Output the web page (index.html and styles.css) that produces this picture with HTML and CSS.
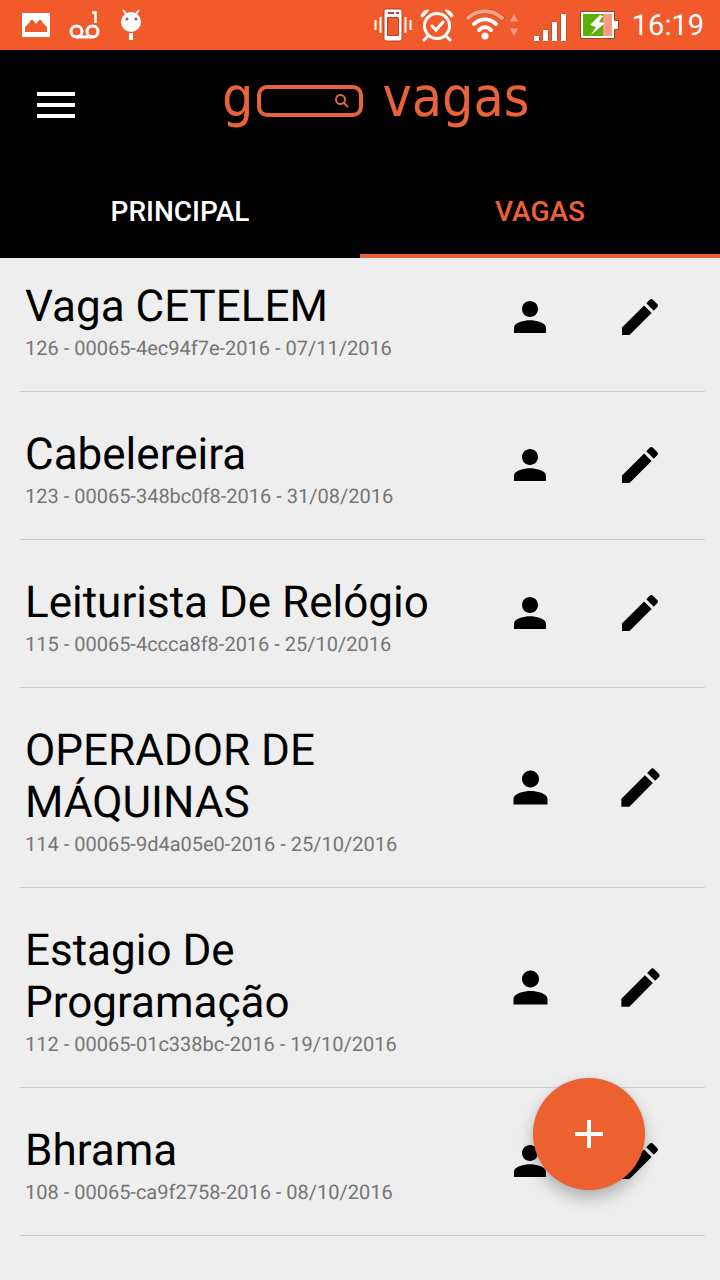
FILE: index.html
```html
<!DOCTYPE html>
<html lang="pt-BR">
<head>
<meta charset="utf-8">
<meta name="viewport" content="width=device-width, initial-scale=1">
<title>Go Vagas</title>
<link rel="stylesheet" href="styles.css">
</head>
<body>
<svg class="defs" aria-hidden="true">
  <symbol id="person" viewBox="0 0 24 24"><path d="M12 12c2.210 0 4-1.790 4-4s-1.790-4-4-4-4 1.790-4 4 1.790 4 4 4zm0 1.600c-2.670 0-8 1.050-8 3.720V20h16v-2.680c0-2.670-5.330-3.720-8-3.720z"/></symbol>
  <symbol id="pencil" viewBox="0 0 24 24"><path d="M3 17.250V21h3.750L17.810 9.940l-3.750-3.750L3 17.250zM20.710 7.040c.39-.39.39-1.020 0-1.410l-2.340-2.340c-.39-.39-1.020-.39-1.410 0l-1.830 1.830 3.750 3.750 1.830-1.830z"/></symbol>
</svg>
<div class="status">
  <div class="status-left">
    <svg width="28" height="24" viewBox="0 0 28 24"><path fill="#fff" fill-rule="evenodd" d="M0 0h28v24H0zM3 19h22v-5l-4-4-2-3h-2l-3 4-3-4H9l-2 3-4 4z"/></svg>
    <svg width="32" height="28" viewBox="0 0 32 28" fill="none" stroke="#fff" stroke-width="3"><circle cx="7.500" cy="20.500" r="5.500"/><circle cx="23.500" cy="20.500" r="5.500"/><path d="M7 26h17"/><path d="M23 1.500h3.500V12" stroke-width="2.500"/></svg>
    <svg width="22" height="32" viewBox="0 0 22 32"><circle cx="11" cy="13" r="10" fill="#fff"/><path d="M3 1l4 5M19 1l-4 5" stroke="#fff" stroke-width="2"/><path d="M11 24v7" stroke="#fff" stroke-width="4"/><circle cx="7" cy="10" r="1.500" fill="#a55"/><circle cx="16" cy="10" r="1.500" fill="#a55"/></svg>
  </div>
  <div class="status-right">
    <svg width="38" height="34" viewBox="0 0 38 34"><rect x="10" y="1" width="18" height="32" rx="2" fill="#fff" stroke="#b5442a"/><path fill="#f15a2b" stroke="#b5442a" d="M13.500 9.500h11v18h-11z"/><path d="M14 5h6M22 5h3" stroke="#b5442a" stroke-width="2"/><path d="M1.500 12v10M6.500 9v16M31.500 9v16M36.500 12v10" stroke="#fff" stroke-width="2"/></svg>
    <svg width="36" height="34" viewBox="0 0 36 34" fill="none" stroke="#fff" stroke-linecap="round"><circle cx="18" cy="18" r="12.500" stroke-width="3"/><path d="M13 18l4 4 7-8M8 29l-3 3M28 29l3 3" stroke-width="3"/><path d="M2 8c1-4 4-6 8-6L4 9zM34 8c-1-4-4-6-8-6l6 7z" fill="#fff" stroke-width="1"/></svg>
    <svg class="wifi" width="40" height="34" viewBox="0 0 40 34" fill="none" stroke="#fff" stroke-linecap="round"><path d="M3 10c10-9 24-9 34 0" stroke="#b5442a" stroke-width="5"/><path d="M3 10c10-9 24-9 34 0" stroke="#ffa283" stroke-width="4"/><path d="M9 16c7-6 15-6 22 0M14 22c4-4 8-4 12 0" stroke-width="4"/><circle cx="20" cy="28" r="3.500" fill="#fff" stroke="none"/></svg>
    <svg class="arrows" width="12" height="26" viewBox="0 0 12 26" fill="#ff9878" stroke="#d9603c"><path d="M6 1l5 9H1zM6 25l5-9H1z"/></svg>
    <svg class="signal" width="34" height="30" viewBox="0 0 34 30" fill="#fff" stroke="#c64d2a"><rect x=".5" y="23.500" width="6" height="6" rx="1"/><rect x="9.500" y="17.500" width="6" height="12" rx="1"/><rect x="18.500" y="9.500" width="6" height="20" rx="1"/><rect x="27.500" y="1.500" width="6" height="28" rx="1"/></svg>
    <svg class="battery" width="39" height="28" viewBox="0 0 39 28"><path d="M.5.500h34v9h4v9h-4v9H.5z" fill="#fff" stroke="#8b4a2b"/><path fill="#5bb00c" d="M3 3h20v22H3z"/><path fill="#f99b84" d="M23 3h9v22h-9z"/><path fill="#fff" d="M20 4L10 14l6 2-5 8 14-12-6-1 4-6z"/></svg>
    <span class="clock">16:19</span>
  </div>
</div>
<header class="header">
  <div class="bar">
    <button class="menu" aria-label="Menu"><span></span><span></span><span></span></button>
    <div class="logo">
      <span>g</span>
      <div class="logo-box"><svg width="14" height="14" viewBox="0 0 14 14" fill="none" stroke="#e8623a" stroke-width="2"><circle cx="5.500" cy="5.500" r="4.500"/><path d="M8.500 8.500L13 13"/></svg></div>
      <span>vagas</span>
    </div>
  </div>
  <nav class="tabs">
    <button class="tab">PRINCIPAL</button>
    <button class="tab active">VAGAS</button>
  </nav>
</header>
<main class="list">
  <article class="row">
    <div class="text"><h2>Vaga CETELEM</h2><p>126 - 00065-4ec94f7e-2016 - 07/11/2016</p></div>
    <button class="action" aria-label="Candidatos"><svg><use href="#person"/></svg></button>
    <button class="action" aria-label="Editar"><svg><use href="#pencil"/></svg></button>
  </article>
  <article class="row">
    <div class="text"><h2>Cabelereira</h2><p>123 - 00065-348bc0f8-2016 - 31/08/2016</p></div>
    <button class="action" aria-label="Candidatos"><svg><use href="#person"/></svg></button>
    <button class="action" aria-label="Editar"><svg><use href="#pencil"/></svg></button>
  </article>
  <article class="row">
    <div class="text"><h2>Leiturista De Relógio</h2><p>115 - 00065-4ccca8f8-2016 - 25/10/2016</p></div>
    <button class="action" aria-label="Candidatos"><svg><use href="#person"/></svg></button>
    <button class="action" aria-label="Editar"><svg><use href="#pencil"/></svg></button>
  </article>
  <article class="row tall">
    <div class="text"><h2>OPERADOR DE MÁQUINAS</h2><p>114 - 00065-9d4a05e0-2016 - 25/10/2016</p></div>
    <button class="action" aria-label="Candidatos"><svg><use href="#person"/></svg></button>
    <button class="action" aria-label="Editar"><svg><use href="#pencil"/></svg></button>
  </article>
  <article class="row tall">
    <div class="text"><h2>Estagio De Programação</h2><p>112 - 00065-01c338bc-2016 - 19/10/2016</p></div>
    <button class="action" aria-label="Candidatos"><svg><use href="#person"/></svg></button>
    <button class="action" aria-label="Editar"><svg><use href="#pencil"/></svg></button>
  </article>
  <article class="row">
    <div class="text"><h2>Bhrama</h2><p>108 - 00065-ca9f2758-2016 - 08/10/2016</p></div>
    <button class="action" aria-label="Candidatos"><svg><use href="#person"/></svg></button>
    <button class="action" aria-label="Editar"><svg><use href="#pencil"/></svg></button>
  </article>
</main>
<button class="fab" aria-label="Adicionar vaga"><svg width="28" height="28" viewBox="0 0 28 28"><path d="M14 0v28M0 14h28" stroke="#fff" stroke-width="4"/></svg></button>
</body>
</html>
```
FILE: styles.css
```css
* { box-sizing: border-box; }
body {
  margin: 0;
  min-height: 100vh;
  background: #eee;
  color: #000;
  font-family: Roboto, sans-serif;
  text-rendering: geometricPrecision;
}
button {
  padding: 0;
  border: 0;
  background: none;
  color: inherit;
  font: inherit;
  cursor: pointer;
}
svg { display: block; flex: none; }
.defs { display: none; }

.status {
  display: flex;
  align-items: center;
  justify-content: space-between;
  height: 50px;
  padding: 0 16px 0 22px;
  background: #f15a2b;
  color: #fff;
}
.status-left, .status-right { display: flex; align-items: center; }
.status-left { gap: 19px; }
.status-right { gap: 7px; }
.wifi { margin-left: 3px; }
.arrows { margin-left: -4px; }
.signal { margin: 4px 6px 0; }
.clock {
  margin-left: 6px;
  padding-top: 3px;
  font-size: 29px;
  line-height: 47px;
}

.header {
  position: relative;
  z-index: 1;
  background: #000;
}
.bar {
  display: flex;
  align-items: center;
  height: 110px;
  padding-left: 37px;
}
.menu {
  display: flex;
  flex-direction: column;
  gap: 7px;
  width: 38px;
}
.menu span { height: 4px; background: #fff; }
.logo {
  display: flex;
  align-items: center;
  gap: 4px;
  margin-left: 147px;
  padding-bottom: 16px;
  color: #e8623a;
  font-family: "DejaVu Sans Condensed", "DejaVu Sans", sans-serif;
  font-stretch: condensed;
  font-size: 55px;
  line-height: 64px;
}
.logo span:last-child { margin-left: 15px; }
.logo-box {
  display: flex;
  align-items: center;
  justify-content: flex-end;
  width: 106px;
  height: 32px;
  margin-top: 8px;
  padding-right: 10px;
  border: 4px solid #e8623a;
  border-radius: 10px;
}
.tabs { display: flex; height: 98px; }
.tab {
  flex: 1;
  padding-top: 4px;
  border-top: 4px solid transparent;
  border-bottom: 4px solid transparent;
  color: #fff;
  font-size: 28px;
  font-weight: 500;
}
.tab.active { border-bottom-color: #ee6033; color: #ee6033; }

.list { margin: -14px 15px 0 20px; }
.row {
  display: flex;
  align-items: center;
  padding-right: 10px;
  border-bottom: 1px solid #ccc;
}
.text { flex: 1; padding: 36px 0 31px 5px; }
.text h2 {
  margin: 0 0 4px;
  font-size: 44px;
  font-weight: 400;
  line-height: 52px;
}
.text p {
  margin: 0;
  color: #757575;
  font-size: 20px;
  line-height: 24px;
}
.action {
  display: flex;
  align-items: center;
  justify-content: center;
  width: 110px;
  height: 72px;
  padding-bottom: 1px;
}
.action svg { width: 48px; height: 48px; }
.tall .action svg { width: 51px; height: 51px; }

.fab {
  position: fixed;
  right: 75px;
  bottom: 90px;
  z-index: 2;
  display: flex;
  align-items: center;
  justify-content: center;
  width: 112px;
  height: 112px;
  border-radius: 50%;
  background: #ed6030;
  box-shadow: 0 8px 16px rgba(0, 0, 0, .26), 0 0 3px rgba(0, 0, 0, .12);
}
```
